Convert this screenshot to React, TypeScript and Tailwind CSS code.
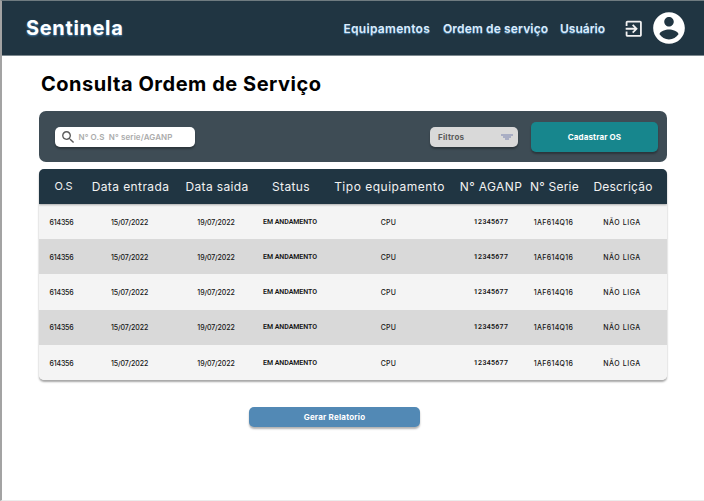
import React from "react";

const columns = [
  { label: "O.S", head: "translate-x-px text-[11px] tracking-[-0.1px]", cell: "-translate-x-px tracking-[-0.15px]" },
  { label: "Data entrada", head: "translate-x-px tracking-[0.4px]", cell: "tracking-[-0.1px]" },
  { label: "Data saida", head: "translate-x-px tracking-[0.35px]", cell: "tracking-[-0.1px]" },
  { label: "Status", head: "translate-x-px tracking-[0.35px]", cell: "font-['Roboto',sans-serif] font-semibold tracking-[-0.05px]" },
  { label: "Tipo equipamento", head: "tracking-[0.5px]", cell: "-translate-x-px tracking-[0.3px]" },
  { label: "N° AGANP", head: "tracking-[0.4px]", cell: "font-['Roboto',sans-serif] font-semibold tracking-[0.3px]" },
  { label: "N° Serie", head: "translate-x-px tracking-[0.2px]", cell: "tracking-[0.3px]" },
  { label: "Descrição", head: "translate-x-px tracking-[0.2px]", cell: "tracking-[0.55px]" },
];

const order = ["614356", "15/07/2022", "19/07/2022", "EM ANDAMENTO", "CPU", "12345677", "1AF614Q16", "NÃO LIGA"];
const orders = [order, order, order, order, order];

const rowGrid =
  "grid grid-cols-[47px_87px_86px_62px_137px_66px_59px_78px] items-center justify-items-center whitespace-nowrap";

export default function App() {
  return (
    <div className="h-[501px] w-[704px] overflow-hidden border-b border-l-2 border-t border-b-[#ececec] border-l-[#a3a3a3] border-t-[#6f7b80] bg-white font-['Inter',sans-serif]">
      <header className="flex h-[55px] items-center border-b border-[#7d898f] bg-[#203542] pl-[24px] text-[#dcecfa]">
        <span className="w-[317.5px] text-[20px] font-bold leading-none tracking-[0.65px] text-white [text-shadow:0_1px_2px_#4682b4]">
          Sentinela
        </span>
        <nav className="mt-px flex w-[279.5px] whitespace-nowrap text-[12px] font-semibold leading-none [text-shadow:0_1px_1px_#4682b4]">
          <a className="w-[99.5px] tracking-[0.3px]">Equipamentos</a>
          <a className="w-[117px] tracking-[0.15px]">Ordem de serviço</a>
          <a className="tracking-[0px]">Usuário</a>
        </nav>
        <svg viewBox="0 0 24 24" className="mt-px size-[21.5px] shrink-0 fill-[#f1f1f1]">
          <path d="M10.09 15.59L11.5 17l5-5-5-5-1.41 1.41L12.67 11H3v2h9.67l-2.58 2.59zM19 3H5c-1.11 0-2 .9-2 2v4h2V5h14v14H5v-4H3v4c0 1.1.89 2 2 2h14c1.1 0 2-.9 2-2V5c0-1.1-.9-2-2-2z" />
        </svg>
        <svg viewBox="0 0 24 24" className="ml-[5.5px] size-[38px] shrink-0 fill-white">
          <path d="M12 2C6.48 2 2 6.48 2 12s4.48 10 10 10 10-4.48 10-10S17.52 2 12 2zm0 3c1.66 0 3 1.34 3 3s-1.34 3-3 3-3-1.34-3-3 1.34-3 3-3zm0 14.2c-2.5 0-4.71-1.28-6-3.22.03-1.99 4-3.08 6-3.08 1.99 0 5.97 1.09 6 3.08-1.29 1.94-3.5 3.22-6 3.22z" />
        </svg>
      </header>

      <main className="pl-[37px]">
        <h1 className="ml-[2px] pt-[17px] text-[20px] font-bold leading-[22px] tracking-[0.53px] text-black">
          Consulta Ordem de Serviço
        </h1>

        <section className="mt-[16px] flex h-[51px] w-[628px] items-center rounded-[7px] bg-[#3e4c55] pl-[16px]">
          <label className="flex h-[20px] w-[140px] items-center rounded-[5px] bg-white pl-[5px] shadow-[0_2px_2px_rgba(0,0,0,0.3)]">
            <svg viewBox="0 0 24 24" className="mt-px size-[16.5px] fill-[#5c5c5c]">
              <path d="M15.5 14h-.79l-.28-.27C15.41 12.59 16 11.11 16 9.5 16 5.91 13.09 3 9.5 3S3 5.91 3 9.5 5.91 16 9.5 16c1.61 0 3.09-.59 4.23-1.57l.27.28v.79l5 4.99L20.49 19l-4.99-5zm-6 0C7.01 14 5 11.99 5 9.5S7.01 5 9.5 5 14 7.01 14 9.5 11.99 14 9.5 14z" />
            </svg>
            <span className="ml-[2px] whitespace-pre text-[8px] font-semibold leading-none tracking-[0.12px] text-[#ababab]">N° O.S  N° serie/AGANP</span>
          </label>
          <button className="ml-[235px] flex h-[20px] w-[88px] items-center justify-between rounded-[5px] bg-[#d9d9d9] pl-[8px] pr-[5px] text-[8px] font-bold leading-none tracking-[0.25px] text-[#5b5b5b] shadow-[0_2px_2px_rgba(0,0,0,0.3)]">
            Filtros
            <svg viewBox="0 0 12 6" className="h-[6px] w-[12px] fill-[#a9aec4]">
              <path d="M0 0h12v2H0zM2 2h8v2H2zM4 4h4v2H4z" />
            </svg>
          </button>
          <button className="ml-[13px] h-[30px] w-[127px] rounded-[5px] bg-[#17868d] text-[8px] font-bold leading-none tracking-[0.12px] text-white shadow-[0_2px_2px_rgba(0,0,0,0.3)]">
            Cadastrar OS
          </button>
        </section>

        <section className="mt-[7px] h-[211px] w-[628px] overflow-hidden rounded-[5px] bg-[#f4f4f4] shadow-[0_2px_2px_rgba(0,0,0,0.35)]">
          <div className={`${rowGrid} relative h-[35px] bg-[#203542] text-[12px] leading-none text-[#f2f2f2] shadow-[0_1px_2px_rgba(0,0,0,0.3)]`}>
            {columns.map((c) => (
              <span key={c.label} className={c.head}>{c.label}</span>
            ))}
          </div>
          {orders.map((row, i) => (
            <div
              key={i}
              className={`${rowGrid} h-[35.2px] pt-[1.5px] text-[7px] font-medium leading-none text-[#161616] ${i % 2 ? "bg-[#d9d9d9]" : "bg-[#f4f4f4]"}`}
            >
              {row.map((value, j) => (
                <span key={j} className={columns[j].cell}>{value}</span>
              ))}
            </div>
          ))}
        </section>

        <button className="ml-[210px] mt-[27px] block h-[20px] w-[171px] rounded-[5px] bg-[#5289b5] text-[8px] font-bold leading-none tracking-[0.2px] text-white shadow-[0_2px_2px_rgba(0,0,0,0.3)]">
          Gerar Relatorio
        </button>
      </main>
    </div>
  );
}
